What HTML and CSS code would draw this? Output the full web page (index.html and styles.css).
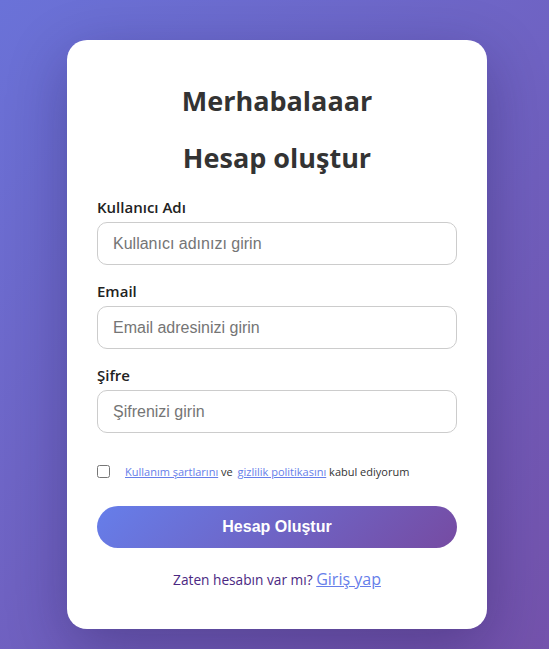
FILE: index.html
```html
<!DOCTYPE html>
<html lang="tr">
<head>
<meta charset="utf-8">
<title>Hesap oluştur</title>
<link rel="stylesheet" href="styles.css">
</head>
<body>
<div class="card">
  <h1 class="title">Merhabalaaar</h1>
  <h2 class="title">Hesap oluştur</h2>
  <form class="form">
    <div class="group">
      <label class="label" for="u">Kullanıcı Adı</label>
      <input class="input" id="u" type="text" placeholder="Kullanıcı adınızı girin">
    </div>
    <div class="group">
      <label class="label" for="e">Email</label>
      <input class="input" id="e" type="email" placeholder="Email adresinizi girin">
    </div>
    <div class="group">
      <label class="label" for="p">Şifre</label>
      <input class="input" id="p" type="password" placeholder="Şifrenizi girin">
    </div>
    <div class="terms">
      <input class="check" type="checkbox" id="t">
      <label class="terms-text" for="t"><a href="#" class="tlink">Kullanım şartlarını</a> ve <a href="#" class="tlink">gizlilik politikasını</a> kabul ediyorum</label>
    </div>
    <button class="btn" type="button">Hesap Oluştur</button>
  </form>
  <p class="footer">Zaten hesabın var mı? <a href="#" class="login">Giriş yap</a></p>
</div>
</body>
</html>
```
FILE: styles.css
```css
html, body {
  margin: 0;
  padding: 0;
}
body {
  min-height: 649px;
  background: linear-gradient(135deg, #6a72d8 0%, #7452ac 100%);
  font-family: "Open Sans", "Noto Sans", sans-serif;
  color: #333;
  overflow: hidden;
}
.card {
  box-sizing: border-box;
  width: 420px;
  margin: 40px 0 0 67px;
  background: #fff;
  border-radius: 20px;
  padding: 42px 30px 38px;
  box-shadow: 0 18px 60px rgba(20, 10, 60, 0.3);
}
.title {
  margin: 0;
  text-align: center;
  font-size: 27px;
  line-height: 37px;
  font-weight: 700;
  color: #333;
}
h1.title {
  margin-bottom: 20px;
}
h2.title {
  margin-bottom: 21px;
}
.form {
  margin: 0;
}
.group {
  margin-bottom: 16px;
}
.label {
  display: block;
  font-size: 15px;
  line-height: 20px;
  font-weight: 600;
  color: #222;
  margin-bottom: 5px;
}
.input {
  display: block;
  box-sizing: border-box;
  width: 100%;
  height: 43px;
  padding: 0 15px;
  border: 1px solid #ccc;
  border-radius: 10px;
  font-family: "Liberation Sans", Arial, sans-serif;
  font-size: 16px;
  color: #333;
  outline: none;
}
.input::placeholder {
  color: #757575;
}
.terms {
  display: flex;
  align-items: center;
  margin-top: 28px;
  height: 20px;
}
.check {
  margin: 0 13px 0 0;
  width: 13px;
  height: 13px;
}
.terms-text {
  font-size: 11px;
  color: #333;
}
.tlink {
  color: #667eea;
  margin-left: 2px;
}
.btn {
  display: block;
  width: 100%;
  height: 42px;
  margin-top: 25px;
  border: none;
  border-radius: 21px;
  background: linear-gradient(135deg, #667eea 0%, #764ba2 100%);
  color: #fff;
  font-family: "Liberation Sans", Arial, sans-serif;
  font-size: 16px;
  font-weight: 700;
}
.footer {
  margin: 20px 0 0;
  text-align: center;
  font-size: 13.7px;
  line-height: 22px;
  color: #4b2882;
}
.login {
  color: #667eea;
  font-size: 16px;
}
```
